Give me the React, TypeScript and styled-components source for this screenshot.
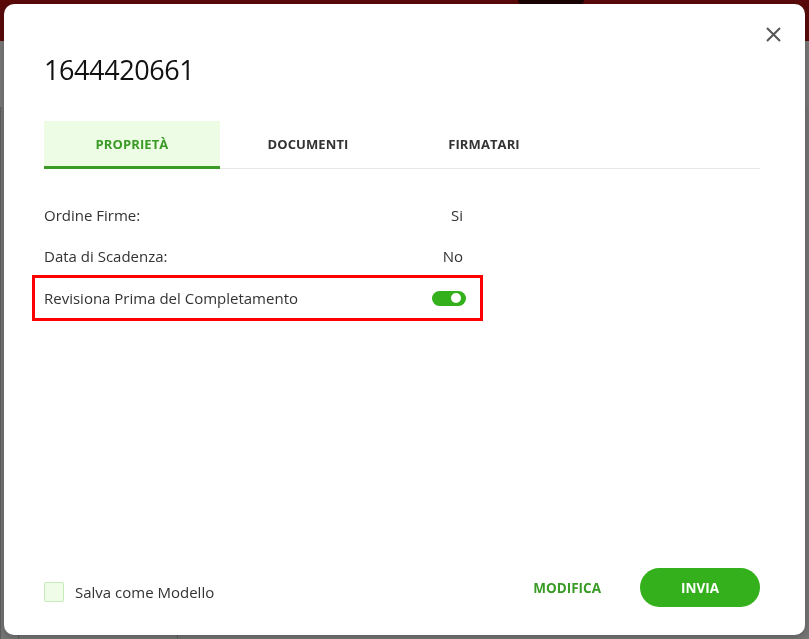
import { useState } from 'react'
import styled, { createGlobalStyle } from 'styled-components'

const GlobalStyle = createGlobalStyle`
	html, body {
		margin: 0;
		padding: 0;
		height: 100%;
		overflow: hidden;
	}
	body {
		font-family: 'Open Sans', 'Noto Sans', Arial, sans-serif;
		background: #777777;
	}
`

const green = '#33b01b'
const greenDark = '#3a9b26'

// dimmed page behind the dialog
const Page = styled.div`
	height: 100vh;
	display: flex;
	flex-direction: column;
`
const PageHeader = styled.div`
	height: 41px;
	background: #5b0a0a;
	display: flex;
	padding-left: 518px;
`
const HeaderPill = styled.div`
	width: 66px;
	height: 5px;
	border-radius: 0 0 6px 6px;
	background: #1a0505;
`
const PageBody = styled.div`
	flex: 1;
	display: grid;
	grid-template-columns: 18px 159px 1fr;
	border-top: 66px solid #7a7a7a;
	background: #767676;
`
const PageCol = styled.div`
	border-left: 1px solid #5e5e5e;
`

const Overlay = styled.div`
	position: fixed;
	inset: 0;
	padding: 4px;
	display: flex;
`
const Dialog = styled.div`
	position: relative;
	flex: 1;
	background: #fff;
	border-radius: 10px;
	padding: 48px 45px 28px 40px;
	display: flex;
	flex-direction: column;
	box-shadow: 0 2px 8px rgba(0, 0, 0, 0.25);
`
const CloseButton = styled.button`
	position: absolute;
	top: 18px;
	right: 19px;
	width: 25px;
	height: 25px;
	padding: 0;
	border: 0;
	background: none;
	display: flex;
	align-items: center;
	justify-content: center;
	cursor: pointer;
`
const Title = styled.h1`
	margin: 0;
	font-size: 27px;
	line-height: 36px;
	font-weight: 400;
	color: #111;
	letter-spacing: -0.4px;
`

const Tabs = styled.div`
	margin-top: 33px;
	display: flex;
	border-bottom: 1px solid #e6e6e6;
`
const Tab = styled.button<{ $active?: boolean }>`
	width: 176px;
	height: 48px;
	padding: 0;
	border: 0;
	border-bottom: 3px solid ${p => (p.$active ? greenDark : 'transparent')};
	margin-bottom: -1px;
	background: ${p => (p.$active ? '#edfce4' : 'transparent')};
	color: ${p => (p.$active ? greenDark : '#333')};
	font-family: inherit;
	font-size: 13px;
	font-weight: 700;
	letter-spacing: 0.1px;
	cursor: pointer;
`

const Props = styled.div`
	margin-top: 25px;
	width: 420px;
	display: flex;
	flex-direction: column;
`
const Row = styled.div<{ $highlight?: boolean }>`
	height: 41px;
	display: flex;
	align-items: center;
	justify-content: space-between;
	font-size: 15px;
	color: #333;
	box-sizing: border-box;
	${p =>
		p.$highlight &&
		`
		height: 46px;
		margin: -1px -19px 0 -12px;
		padding: 0 14px 0 9px;
		border: 3px solid #ff0000;
	`}
`
const Label = styled.span``
const Value = styled.span`
	padding-right: 1px;
`

const Switch = styled.button<{ $on: boolean }>`
	width: 34px;
	height: 15px;
	padding: 0 3px;
	border: 0;
	border-radius: 8px;
	background: ${p => (p.$on ? green : '#bbb')};
	display: flex;
	align-items: center;
	justify-content: ${p => (p.$on ? 'flex-end' : 'flex-start')};
	cursor: pointer;
	&::after {
		content: '';
		width: 10px;
		height: 10px;
		margin-right: 2px;
		border-radius: 50%;
		background: #fff;
	}
`

const Footer = styled.div`
	margin-top: auto;
	display: flex;
	align-items: center;
	justify-content: space-between;
`
const Check = styled.label`
	display: flex;
	align-items: center;
	gap: 11px;
	margin-top: 8px;
	font-size: 15px;
	color: #333;
	cursor: pointer;
`
const Box = styled.span<{ $checked: boolean }>`
	width: 18px;
	height: 18px;
	border: 1px solid #c5edbb;
	border-radius: 2px;
	background: ${p => (p.$checked ? green : '#eefce8')};
`
const Actions = styled.div`
	display: flex;
	align-items: center;
	gap: 39px;
`
const LinkButton = styled.button`
	padding: 0;
	border: 0;
	background: none;
	color: ${greenDark};
	font-family: inherit;
	font-size: 13.5px;
	font-weight: 700;
	cursor: pointer;
`
const PrimaryButton = styled.button`
	width: 120px;
	height: 39px;
	border: 0;
	border-radius: 20px;
	background: ${green};
	color: #fff;
	font-family: inherit;
	font-size: 13.5px;
	font-weight: 700;
	cursor: pointer;
`

const App = () => {
	const [review, setReview] = useState(true)
	const [saveTemplate, setSaveTemplate] = useState(false)

	return (
		<>
			<GlobalStyle />
			<Page>
				<PageHeader>
					<HeaderPill />
				</PageHeader>
				<PageBody>
					<PageCol />
					<PageCol />
					<PageCol />
				</PageBody>
			</Page>

			<Overlay>
				<Dialog>
					<CloseButton aria-label='Chiudi'>
						<svg width='15' height='15' viewBox='0 0 15 15'>
							<path d='M1 1 L14 14 M14 1 L1 14' stroke='#555' strokeWidth='2' />
						</svg>
					</CloseButton>

					<Title>1644420661</Title>

					<Tabs>
						<Tab $active>PROPRIETÀ</Tab>
						<Tab>DOCUMENTI</Tab>
						<Tab>FIRMATARI</Tab>
					</Tabs>

					<Props>
						<Row>
							<Label>Ordine Firme:</Label>
							<Value>Si</Value>
						</Row>
						<Row>
							<Label>Data di Scadenza:</Label>
							<Value>No</Value>
						</Row>
						<Row $highlight>
							<Label>Revisiona Prima del Completamento</Label>
							<Switch $on={review} onClick={() => setReview(!review)} />
						</Row>
					</Props>

					<Footer>
						<Check onClick={() => setSaveTemplate(!saveTemplate)}>
							<Box $checked={saveTemplate} />
							Salva come Modello
						</Check>
						<Actions>
							<LinkButton>MODIFICA</LinkButton>
							<PrimaryButton>INVIA</PrimaryButton>
						</Actions>
					</Footer>
				</Dialog>
			</Overlay>
		</>
	)
}

export default App
